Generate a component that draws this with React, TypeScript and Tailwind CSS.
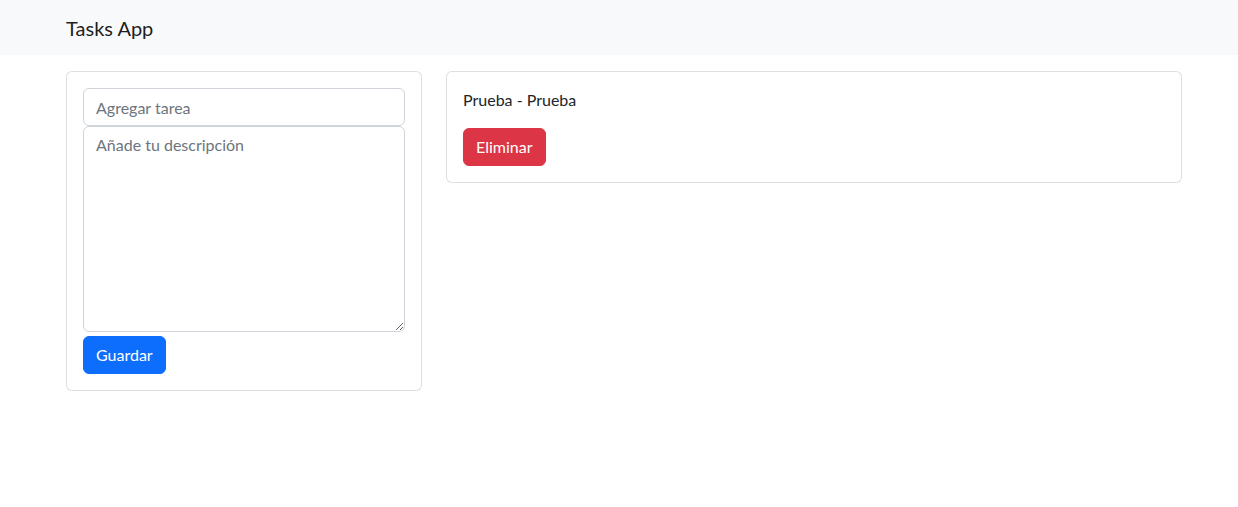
export default function App() {
  return (
    <div className="min-h-[507px] bg-white font-['Lato',sans-serif] text-[16px] leading-6 text-[#212529]">
      <nav className="h-[55px] bg-[#f8f9fa]">
        <div className="flex h-full items-center pl-[66px] pr-[56px]">
          <span className="text-[20px] leading-[30px] text-black/90">Tasks App</span>
        </div>
      </nav>

      <div className="mt-4 flex gap-6 pl-[66px] pr-[56px]">
        <div className="w-[356px] shrink-0">
          <div className="rounded-[6px] border border-black/[0.125] bg-white p-4">
            <form onSubmit={(e) => e.preventDefault()}>
              <input
                type="text"
                placeholder="Agregar tarea"
                className="block h-[38px] w-full rounded-[6px] border border-[#ced4da] px-3 py-1.5 outline-none placeholder:text-[#6c757d]"
              />
              <textarea
                placeholder="Añade tu descripción"
                className="block h-[206px] w-full rounded-[6px] border border-[#ced4da] px-3 py-1.5 outline-none placeholder:text-[#6c757d]"
              />
              <button className="mt-[4px] h-[38px] rounded-[6px] border border-[#0d6efd] bg-[#0d6efd] px-3 text-white">
                Guardar
              </button>
            </form>
          </div>
        </div>

        <div className="flex-1">
          <div className="rounded-[6px] border border-black/[0.125] bg-white p-4">
            <p className="mb-4">Prueba - Prueba</p>
            <button className="h-[38px] rounded-[6px] border border-[#dc3545] bg-[#dc3545] px-3 text-white">
              Eliminar
            </button>
          </div>
        </div>
      </div>
    </div>
  );
}
